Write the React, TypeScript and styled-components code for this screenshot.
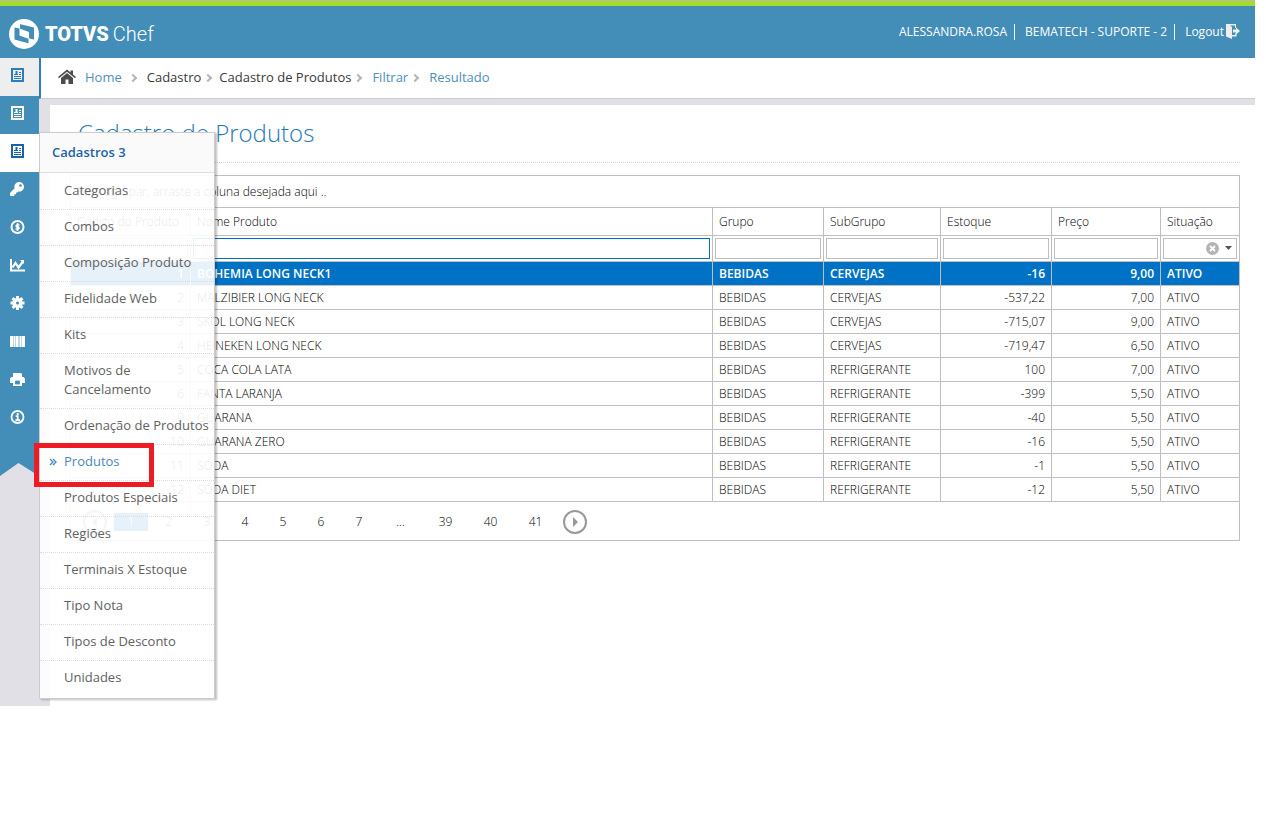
import React from "react";
import styled, { createGlobalStyle, css } from "styled-components";
import { FaKey } from "react-icons/fa";

const Global = createGlobalStyle`
  *, *::before, *::after { box-sizing: border-box; }
  body { margin: 0; background: #fff; color: #393939; font: 13px/20px "Open Sans", "Noto Sans", sans-serif; }
  a { color: inherit; text-decoration: none; }
  ul, ol { list-style: none; margin: 0; padding: 0; }
  svg { display: block; }
`;

const Page = styled.div`
  padding-right: 11px;
`;

const Navbar = styled.header`
  display: flex;
  align-items: center;
  justify-content: space-between;
  height: 58px;
  padding: 0 15px 0 9px;
  color: #fff;
  background: linear-gradient(#b9b9b9 1px, #a6db29 1px, #a6db29 6px, #438eb9 6px);
`;

const Brand = styled.a`
  display: flex;
  align-items: center;
  padding-top: 9px;
  font: 300 20px/30px Roboto, sans-serif;
`;

const BrandName = styled.b`
  margin: 0 4px 0 6px;
  font-weight: 900;
`;

const UserBar = styled.ul`
  display: flex;
  align-items: center;
  padding-top: 5px;
  font-size: 12px;
  line-height: 16px;
`;

const UserItem = styled.li<{ $divided?: boolean }>`
  display: flex;
  padding-right: ${(p) => (p.$divided ? 7 : 0)}px;
  margin-right: ${(p) => (p.$divided ? 10 : 0)}px;
  border-right: ${(p) => (p.$divided ? "1px solid #fff" : "none")};
  a { display: flex; gap: 2px; }
`;

const Body = styled.div`
  display: flex;
  min-height: 648px;
  background: #e0e0e6;
`;

const Rail = styled.nav`
  position: relative;
  flex: none;
  width: 39px;
`;

const RailItem = styled.li<{ $tone?: "hover" | "open" }>`
  height: 38px;
  background: #438eb9;
  color: #fff;
  a { display: flex; align-items: center; height: 34px; padding-left: 10px; }
  ${(p) => p.$tone === "hover" && css`background: #eee; color: #2b7dbc;`}
  ${(p) => p.$tone === "open" && css`background: #fff; color: #1963aa;`}
`;

const RailTail = styled.svg`
  width: 39px;
  height: 39px;
  fill: #438eb9;
`;

const Main = styled.main`
  flex: 1;
  min-width: 0;
`;

const Crumbs = styled.ol`
  display: flex;
  align-items: center;
  height: 41px;
  padding: 0 0 2px 17px;
  border-left: 2px solid #2b7dbc;
  border-bottom: 1px solid #ccc;
  background: #fff;
`;

const Crumb = styled.li<{ $link?: boolean; $wide?: boolean }>`
  display: flex;
  align-items: center;
  color: ${(p) => (p.$link ? "#4c8fbd" : "#393939")};
  a { display: flex; align-items: center; gap: 9px; }
  &:first-child { padding-right: 4px; }
  &:not(:first-child)::before {
    content: "";
    width: 6px;
    height: 6px;
    margin: 1px ${(p) => (p.$wide ? 11 : 8)}px 0 4px;
    border: solid #b2b6bf;
    border-width: 2px 2px 0 0;
    transform: rotate(45deg);
  }
`;

const Content = styled.section`
  margin: 6px 0 0 11px;
  padding: 13px 15px 0 20px;
  min-height: 601px;
  background: #fff;
`;

const Title = styled.h1`
  margin: 0 0 12px;
  padding: 0 8px 15px;
  border-bottom: 1px dotted #d5d5d5;
  color: #2679b5;
  font: 300 24px/29px "Open Sans", sans-serif;
`;

const Grid = styled.div`
  border: 1px solid #bfbfbf;
  font-size: 12px;
  font-weight: 300;
  line-height: 16px;
  color: #000;
`;

const GroupPanel = styled.div`
  padding: 8px 6px 7px;
`;

const Table = styled.table`
  width: 100%;
  table-layout: fixed;
  border-collapse: separate;
  border-spacing: 0;
`;

const Col = styled.col<{ $w?: number }>`
  width: ${(p) => (p.$w ? `${p.$w}px` : "auto")};
`;

const cell = css`
  padding: 0 6px;
  border-top: 1px solid #bfbfbf;
  border-right: 1px solid #bfbfbf;
  white-space: nowrap;
  &:last-child { border-right: 0; }
`;

const HeadCell = styled.th`
  ${cell}
  height: 28px;
  text-align: left;
  font-weight: 300;
`;

const FilterCell = styled.td`
  ${cell}
  height: 26px;
  padding: 2px;
`;

const FilterInput = styled.input<{ $focused?: boolean }>`
  display: block;
  width: 100%;
  height: 21px;
  border: 1px solid ${(p) => (p.$focused ? "#0072c6" : "#bfbfbf")};
  background: #fff;
  outline: 0;
`;

const FilterCombo = styled.div`
  display: flex;
  align-items: center;
  gap: 3px;
  height: 21px;
  padding-right: 1px;
  border: 1px solid #bfbfbf;
`;

const ComboSelect = styled.select`
  flex: 1;
  min-width: 0;
  height: 19px;
  border: 0;
  appearance: none;
  background: transparent;
`;

const IconButton = styled.button`
  padding: 0;
  border: 0;
  background: none;
`;

const Cell = styled.td<{ $num?: boolean }>`
  ${cell}
  height: 24px;
  text-align: ${(p) => (p.$num ? "right" : "left")};
`;

const Row = styled.tr<{ $selected?: boolean }>`
  ${(p) => p.$selected && css`background: #0072c6; color: #fff; font-weight: 600;`}
`;

const Pager = styled.nav`
  display: flex;
  align-items: center;
  height: 39px;
  padding: 2px 0 0 7px;
  border-top: 1px solid #bfbfbf;
  line-height: 18px;
`;

const PagerArrow = styled.button`
  padding: 0;
  border: 0;
  background: none;
  margin: 0 5px;
`;

const PageLink = styled.a<{ $current?: boolean; $w: number }>`
  width: ${(p) => p.$w}px;
  margin: 0 2px;
  text-align: center;
  ${(p) => p.$current && css`background: #0072c6; color: #fff;`}
`;

const Flyout = styled.section`
  position: absolute;
  z-index: 2;
  top: 74px;
  left: 39px;
  width: 176px;
  border: 1px solid #ccc;
  background: rgba(255, 255, 255, 0.9);
  box-shadow: 2px 1px 2px rgba(0, 0, 0, 0.25);
`;

const FlyoutTitle = styled.h2`
  margin: 0 0 1px;
  padding: 10px 12px;
  height: 40px;
  border-bottom: 1px solid #ddd;
  background: #fafafa;
  color: #1963aa;
  font: 600 13px/19px "Open Sans", sans-serif;
`;

const FlyoutItem = styled.li<{ $active?: boolean }>`
  position: relative;
  padding: 7px 0 9px 24px;
  border-bottom: 1px dotted #dcdcdc;
  line-height: 19px;
  color: ${(p) => (p.$active ? "#4b88b7" : "#616161")};
  &:last-child { border-bottom: 0; padding-bottom: 11px; }
`;

const ActiveMark = styled.svg`
  position: absolute;
  top: 13px;
  left: 9px;
`;

const Highlight = styled.span`
  position: absolute;
  top: -2px;
  left: -6px;
  width: 120px;
  height: 44px;
  border: 5px solid #ed1c24;
`;

const LogoMark = () => (
  <svg width="30" height="30" viewBox="0 0 30 30" aria-hidden="true">
    <circle cx="15" cy="15" r="15" fill="#fff" />
    <path d="M10.500 5 L25 8.500 V20.500 L20 19.500 V24.500 L5.500 20.500 V8.500 L10.500 9.500 Z" fill="#438eb9" />
    <path d="M10.500 9.500 L20 13 V20 L10.500 16.500 Z" fill="#fff" />
    <path d="M10.500 5 V9.500 M20 19.500 V24.500" stroke="#fff" strokeWidth="1" />
  </svg>
);

const BookIcon = () => (
  <svg width="14" height="14" viewBox="0 0 14 14" fill="none" stroke="currentColor" aria-hidden="true">
    <rect x="2" y="1" width="11" height="12" strokeWidth="2" />
    <path d="M4 6.500h4M4 8.500h7M4 10.500h7M9 4.500h2M9 6.500h2" />
    <path d="M5.500 3h2v3h-2z" fill="currentColor" stroke="none" />
  </svg>
);

const DollarIcon = () => (
  <svg width="15" height="14" viewBox="0 0 15 14" fill="none" stroke="currentColor" aria-hidden="true">
    <circle cx="7.500" cy="7" r="6" strokeWidth="2" />
    <path d="M9.500 5H6.700q-1.200 1 0 2h1.800q1.200 1 0 2H5.500M7.500 3v8" strokeWidth="1.500" />
  </svg>
);

const ChartIcon = () => (
  <svg width="15" height="14" viewBox="0 0 15 14" fill="none" stroke="currentColor" aria-hidden="true">
    <path d="M1 1v11.500h14" strokeWidth="2" />
    <path d="M2.500 9.500L5.500 5l3 4.500L13 3.500" strokeWidth="2.200" />
    <path d="M10 2h4v4z" fill="currentColor" stroke="none" />
  </svg>
);

const GearIcon = () => (
  <svg width="15" height="14" viewBox="0 0 15 14" aria-hidden="true">
    <g stroke="currentColor" strokeWidth="3">
      <path d="M7.500 0v14M.5 7h14M2.600 2.100l9.800 9.800M12.400 2.100l-9.800 9.800" />
    </g>
    <circle cx="7.500" cy="7" r="5" fill="currentColor" />
    <circle cx="7.500" cy="7" r="1.500" fill="#438eb9" />
  </svg>
);

const BarcodeIcon = () => (
  <svg width="15" height="11" viewBox="0 0 15 11" aria-hidden="true">
    <rect width="15" height="11" fill="#fff" fillOpacity=".65" />
    <path d="M0 0h3v11H0zM4 0h1v11H4zM6 0h2v11H6zM10 0h1v11h-1zM12 0h3v11h-3z" fill="#fff" />
  </svg>
);

const PrintIcon = () => (
  <svg width="15" height="13" viewBox="0 0 15 13" aria-hidden="true">
    <path d="M3 0h8l1 1v3h1.500L15 5.500V10h-3v3H3v-3H0V5.500L1.500 4H3z" fill="#fff" />
    <path d="M5.500 8h4v3h-4z" stroke="#438eb9" fill="#438eb9" strokeWidth=".8" />
  </svg>
);

const InfoIcon = () => (
  <svg width="15" height="14" viewBox="0 0 15 14" fill="none" stroke="currentColor" aria-hidden="true">
    <circle cx="7.500" cy="7" r="6" strokeWidth="1.800" />
    <path d="M7.700 3v2M5.700 6.200h2v4M5.500 10.200h4.500" strokeWidth="1.800" />
  </svg>
);

const HomeIcon = () => (
  <svg width="18" height="16" viewBox="0 0 18 16" fill="#4c4c4c" aria-hidden="true">
    <path d="M9 4 L15 9 V15 H10.500 V10.500 H7.500 V15 H3 V9 Z" />
    <path d="M9 .5 L12.500 3.400 V1.500 H15 V5.500 L18 8 L17 9.200 L9 2.700 L1 9.200 L0 8 Z" />
  </svg>
);

const LogoutIcon = () => (
  <svg width="14" height="15" viewBox="0 0 14 15" aria-hidden="true">
    <path d="M0 0h10v4H9V1.500H4l2 1.500v8h3V9.500h1.500v3H6V15L0 12.500z" fill="#eee" />
    <path d="M7 5.500h3V3.500l4 3.500-4 3.500v-2H7z" fill="#eee" />
  </svg>
);

const ArrowIcon = ({ back }: { back?: boolean }) => (
  <svg width="24" height="24" viewBox="0 0 24 24" aria-hidden="true">
    <circle cx="12" cy="12" r="11" fill="none" stroke="#999" strokeWidth="2" />
    <path d={back ? "M14 7v10l-5-5z" : "M10 7v10l5-5z"} fill="#999" />
  </svg>
);

const rail = [
  { label: "Cadastros 1", icon: <BookIcon />, tone: "hover" as const },
  { label: "Cadastros 2", icon: <BookIcon /> },
  { label: "Cadastros 3", icon: <BookIcon />, tone: "open" as const },
  { label: "Acesso", icon: <FaKey size={14} /> },
  { label: "Financeiro", icon: <DollarIcon /> },
  { label: "Gráficos", icon: <ChartIcon /> },
  { label: "Configurações", icon: <GearIcon /> },
  { label: "Código de barras", icon: <BarcodeIcon /> },
  { label: "Impressão", icon: <PrintIcon /> },
  { label: "Informações", icon: <InfoIcon /> },
];

const menu = [
  "Categorias", "Combos", "Composição Produto", "Fidelidade Web", "Kits", "Motivos de Cancelamento",
  "Ordenação de Produtos", "Produtos", "Produtos Especiais", "Regiões", "Terminais X Estoque",
  "Tipo Nota", "Tipos de Desconto", "Unidades",
];

const columns = [
  { label: "Código do Produto", width: 120, num: true },
  { label: "Nome Produto" },
  { label: "Grupo", width: 111 },
  { label: "SubGrupo", width: 117 },
  { label: "Estoque", width: 111, num: true },
  { label: "Preço", width: 109, num: true },
  { label: "Situação", width: 78 },
];

const rows = [
  ["1", "BOHEMIA LONG NECK1", "BEBIDAS", "CERVEJAS", "-16", "9,00", "ATIVO"],
  ["2", "MALZIBIER LONG NECK", "BEBIDAS", "CERVEJAS", "-537,22", "7,00", "ATIVO"],
  ["3", "SKOL LONG NECK", "BEBIDAS", "CERVEJAS", "-715,07", "9,00", "ATIVO"],
  ["4", "HEINEKEN LONG NECK", "BEBIDAS", "CERVEJAS", "-719,47", "6,50", "ATIVO"],
  ["5", "COCA COLA LATA", "BEBIDAS", "REFRIGERANTE", "100", "7,00", "ATIVO"],
  ["6", "FANTA LARANJA", "BEBIDAS", "REFRIGERANTE", "-399", "5,50", "ATIVO"],
  ["9", "GUARANA", "BEBIDAS", "REFRIGERANTE", "-40", "5,50", "ATIVO"],
  ["10", "GUARANA ZERO", "BEBIDAS", "REFRIGERANTE", "-16", "5,50", "ATIVO"],
  ["11", "SODA", "BEBIDAS", "REFRIGERANTE", "-1", "5,50", "ATIVO"],
  ["12", "SODA DIET", "BEBIDAS", "REFRIGERANTE", "-12", "5,50", "ATIVO"],
];

const pages = ["1", "2", "3", "4", "5", "6", "7", "...", "39", "40", "41"];

export default function App() {
  return (
    <Page>
      <Global />
      <Navbar>
        <Brand href="#">
          <LogoMark />
          <BrandName>TOTVS</BrandName>
          Chef
        </Brand>
        <UserBar>
          <UserItem $divided>ALESSANDRA.ROSA</UserItem>
          <UserItem $divided>BEMATECH - SUPORTE - 2</UserItem>
          <UserItem><a href="#">Logout <LogoutIcon /></a></UserItem>
        </UserBar>
      </Navbar>
      <Body>
        <Rail>
          <ul>
            {rail.map((r) => (
              <RailItem key={r.label} $tone={r.tone}>
                <a href="#" aria-label={r.label}>{r.icon}</a>
              </RailItem>
            ))}
          </ul>
          <RailTail viewBox="0 0 39 39" aria-hidden="true"><path d="M0 0H39V38L18.500 25L0 38Z" /></RailTail>
          <Flyout>
            <FlyoutTitle>Cadastros 3</FlyoutTitle>
            <ul>
              {menu.map((m) => {
                const active = m === "Produtos";
                return (
                  <FlyoutItem key={m} $active={active}>
                    {active && (
                      <ActiveMark width="8" height="8" viewBox="0 0 8 8" fill="none" stroke="#4b88b7" strokeWidth="1.300" aria-hidden="true">
                        <path d="M1 1l3 3-3 3M4 1l3 3-3 3" />
                      </ActiveMark>
                    )}
                    <a href="#">{m}</a>
                    {active && <Highlight />}
                  </FlyoutItem>
                );
              })}
            </ul>
          </Flyout>
        </Rail>
        <Main>
          <Crumbs>
            <Crumb $link><a href="#"><HomeIcon />Home</a></Crumb>
            <Crumb $wide>Cadastro</Crumb>
            <Crumb>Cadastro de Produtos</Crumb>
            <Crumb $link $wide><a href="#">Filtrar</a></Crumb>
            <Crumb $link $wide><a href="#">Resultado</a></Crumb>
          </Crumbs>
          <Content>
            <Title>Cadastro de Produtos</Title>
            <Grid>
              <GroupPanel>Para agrupar, arraste a coluna desejada aqui ..</GroupPanel>
              <Table>
                <colgroup>{columns.map((c) => <Col key={c.label} $w={c.width} />)}</colgroup>
                <thead>
                  <tr>{columns.map((c) => <HeadCell key={c.label} scope="col">{c.label}</HeadCell>)}</tr>
                </thead>
                <tbody>
                  <tr>
                    {columns.map((c) => (
                      <FilterCell key={c.label}>
                        {c.label === "Situação" ? (
                          <FilterCombo>
                            <ComboSelect aria-label="Filtrar Situação"><option /></ComboSelect>
                            <IconButton aria-label="Limpar">
                              <svg width="13" height="13" viewBox="0 0 13 13">
                                <circle cx="6.500" cy="6.500" r="6.500" fill="#b4b4b4" />
                                <path d="M4 4l5 5M9 4l-5 5" stroke="#fff" strokeWidth="1.800" />
                              </svg>
                            </IconButton>
                            <svg width="13" height="5" viewBox="0 0 13 5" aria-hidden="true"><path d="M3 0h7L6.500 4z" fill="#555" /></svg>
                          </FilterCombo>
                        ) : (
                          <FilterInput aria-label={`Filtrar ${c.label}`} $focused={c.label === "Nome Produto"} />
                        )}
                      </FilterCell>
                    ))}
                  </tr>
                  {rows.map((r, i) => (
                    <Row key={r[0]} $selected={i === 0}>
                      {r.map((v, j) => <Cell key={j} $num={columns[j].num}>{v}</Cell>)}
                    </Row>
                  ))}
                </tbody>
              </Table>
              <Pager aria-label="Páginas">
                <PagerArrow aria-label="Anterior"><ArrowIcon back /></PagerArrow>
                {pages.map((p, i) => (
                  <PageLink key={p} href="#" $current={i === 0} $w={p.length > 1 ? 41 : 34}>{p}</PageLink>
                ))}
                <PagerArrow aria-label="Próxima"><ArrowIcon /></PagerArrow>
              </Pager>
            </Grid>
          </Content>
        </Main>
      </Body>
    </Page>
  );
}
